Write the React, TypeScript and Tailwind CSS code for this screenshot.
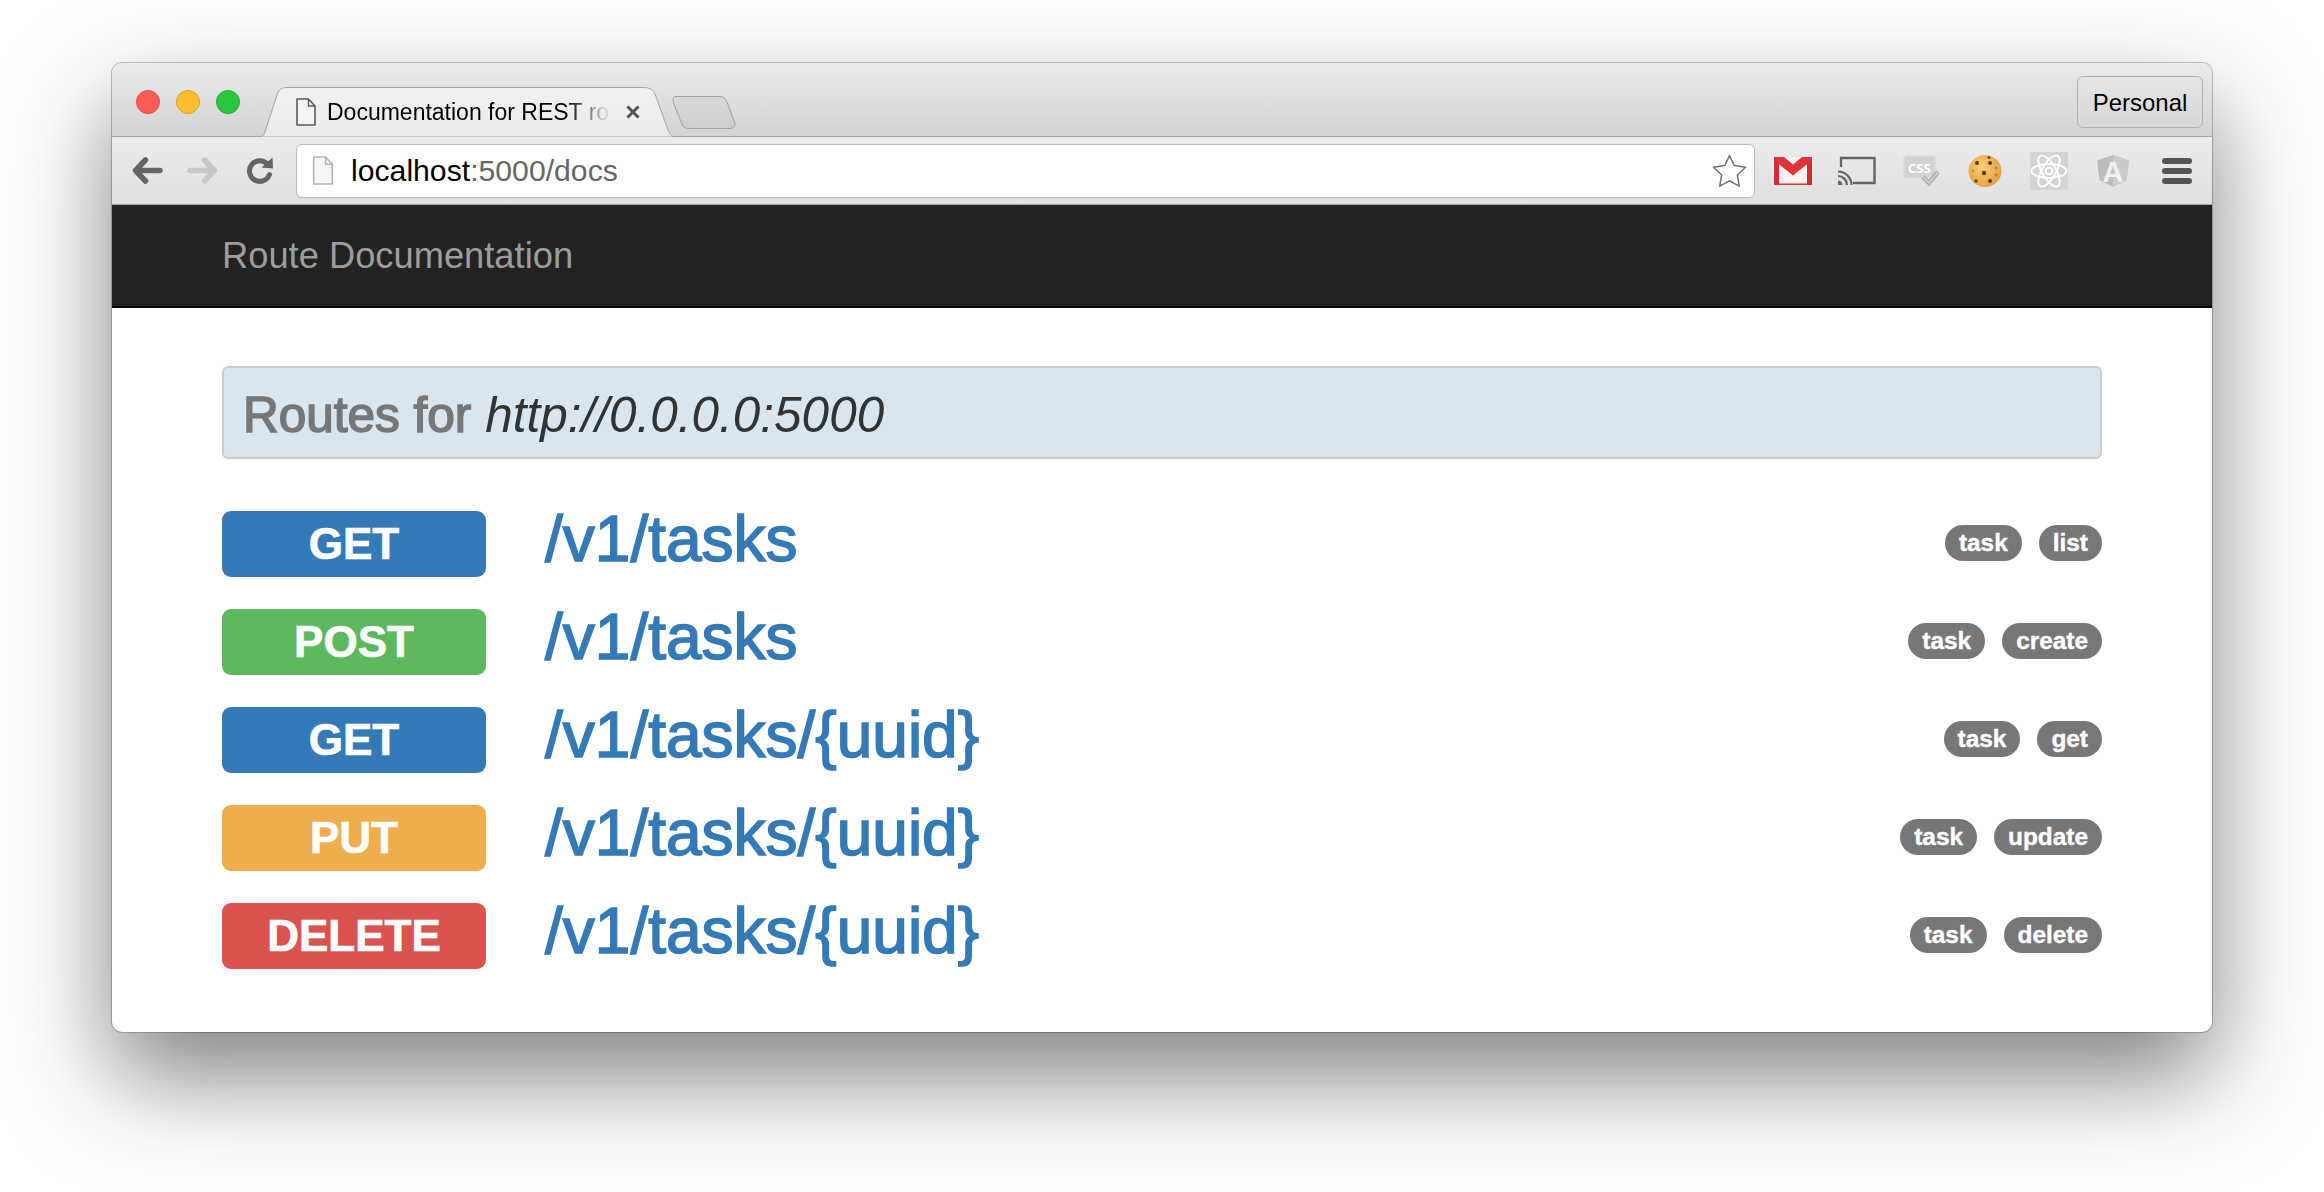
const routes = [
  { method: 'GET', color: 'bg-[#337ab7]', path: '/v1/tasks', tags: ['task', 'list'] },
  { method: 'POST', color: 'bg-[#5cb85c]', path: '/v1/tasks', tags: ['task', 'create'] },
  { method: 'GET', color: 'bg-[#337ab7]', path: '/v1/tasks/{uuid}', tags: ['task', 'get'] },
  { method: 'PUT', color: 'bg-[#f0ad4e]', path: '/v1/tasks/{uuid}', tags: ['task', 'update'] },
  { method: 'DELETE', color: 'bg-[#d9534f]', path: '/v1/tasks/{uuid}', tags: ['task', 'delete'] },
];

const TabShape = () => (
  <svg className="absolute inset-0" width="414" height="50" viewBox="0 0 414 50">
    <defs>
      <linearGradient id="tabFill" x1="0" y1="0" x2="0" y2="1">
        <stop offset="0" stopColor="#f1f1f1" />
        <stop offset="1" stopColor="#ebebeb" />
      </linearGradient>
    </defs>
    <path
      d="M0 49.5C3 49.5 4 48 5 45L17 8C19 2 22 .5 27 .5L383 .5C389 .5 393 2 395 7L408 43C410 47 411 49.5 414 49.5"
      fill="url(#tabFill)"
      stroke="#a6a6a6"
      strokeWidth="1"
    />
  </svg>
);

const PageIcon = ({ className, stroke, fill, w, h }: { className?: string; stroke: string; fill: string; w: number; h: number }) => (
  <svg className={className} width={w} height={h} viewBox="0 0 20 28">
    <path d="M1 1H12.5L19 8V27H1Z" fill={fill} stroke={stroke} strokeWidth="1.6" strokeLinejoin="round" />
    <path d="M12.5 1V8H19" fill="none" stroke={stroke} strokeWidth="1.4" />
  </svg>
);

const Arrow = ({ color, flip, className }: { color: string; flip?: boolean; className?: string }) => (
  <svg className={className} width="31" height="27" viewBox="0 0 31 27">
    <g transform={flip ? 'translate(31 0) scale(-1 1)' : undefined}>
      <path d="M13.5 3L3.5 13.5L13.5 24" fill="none" stroke={color} strokeWidth="5.5" strokeLinecap="round" strokeLinejoin="round" />
      <path d="M5 13.5H28" fill="none" stroke={color} strokeWidth="5.5" strokeLinecap="round" />
    </g>
  </svg>
);

const Reload = ({ className }: { className?: string }) => (
  <svg className={className} width="28" height="27" viewBox="0 0 28 27">
    <path d="M21.5 7.2A10.3 10.3 0 1 0 23.5 17.5" fill="none" stroke="#646464" strokeWidth="5" strokeLinecap="round" />
    <path d="M15.5 10.5L27 11.5L26.5 .5Z" fill="#646464" />
  </svg>
);

const Star = ({ className }: { className?: string }) => (
  <svg className={className} width="35" height="34" viewBox="0 0 35 34">
    <path
      d="M17.5 1.500L22.300 11.600L33.500 13.200L25.300 21L27.300 32.200L17.500 26.800L7.700 32.200L9.700 21L1.500 13.200L12.700 11.600Z"
      fill="#fff"
      stroke="#707070"
      strokeWidth="1.500"
      strokeLinejoin="round"
    />
  </svg>
);

const Gmail = ({ className }: { className?: string }) => (
  <svg className={className} width="38" height="28" viewBox="0 0 38 28">
    <g className="blur-[0.4px]">
      <rect width="38" height="28" fill="#d92a2e" />
      <rect x="5" y="0" width="28" height="26.500" fill="#fbf3f2" />
      <path d="M1 0H10L19 7.500L28 0H37V4L19 18.500L1 4Z" fill="#e2333a" />
    </g>
  </svg>
);

const Cast = ({ className }: { className?: string }) => (
  <svg className={className} width="38" height="29" viewBox="0 0 38 29">
    <path d="M3 11V2H36.500V27H15" fill="none" stroke="#646464" strokeWidth="2.400" />
    <path d="M0 15.500A13.500 13.500 0 0 1 13.500 29" fill="none" stroke="#646464" strokeWidth="2.200" />
    <path d="M0 20A9 9 0 0 1 9 29" fill="none" stroke="#646464" strokeWidth="2.200" />
    <path d="M0 24.500A4.500 4.500 0 0 1 4.500 29H0Z" fill="#646464" />
  </svg>
);

const CssCheck = ({ className }: { className?: string }) => (
  <svg className={className} width="36" height="32" viewBox="0 0 36 32">
    <path d="M1 3Q1 1 3 1H30Q32 1 32 3V21Q32 23 30 23H3Q1 23 1 21Z" fill="#d2d2d2" stroke="#dcdcdc" strokeWidth="1.500" />
    <text x="5" y="17.500" fontFamily="'Open Sans', sans-serif" fontWeight="700" fontSize="13" fill="#fff">CSS</text>
    <path d="M20 22L26 28L35 17" fill="none" stroke="#a9a9a9" strokeWidth="4.500" />
    <path d="M20 22L26 28L35 17" fill="none" stroke="#d4d4d4" strokeWidth="1.600" />
  </svg>
);

const cookieChips = [
  { x: 9, y: 8, r: 2, c: '#5d3a17' },
  { x: 22, y: 8, r: 2, c: '#5d3a17' },
  { x: 21, y: 2.500, r: 1.500, c: '#6e4a22' },
  { x: 16, y: 18, r: 2.200, c: '#5d3a17' },
  { x: 8, y: 26, r: 1.800, c: '#6e4a22' },
  { x: 22, y: 26, r: 2, c: '#5d3a17' },
  { x: 28, y: 13, r: 1.600, c: '#b98336' },
  { x: 28, y: 20, r: 1.600, c: '#b98336' },
  { x: 5, y: 16, r: 1.400, c: '#c9963f' },
];

const Cookie = ({ className }: { className?: string }) => (
  <svg className={className} width="34" height="32" viewBox="0 0 34 32">
    <defs>
      <radialGradient id="cookieFill" cx=".42" cy=".38" r=".7">
        <stop offset="0" stopColor="#f8cd7c" />
        <stop offset="1" stopColor="#e49a34" />
      </radialGradient>
    </defs>
    <g className="blur-[0.4px]">
      <ellipse cx="17" cy="16" rx="16.500" ry="16" fill="url(#cookieFill)" />
      {cookieChips.map((chip) => (
        <circle key={`${chip.x}-${chip.y}`} cx={chip.x} cy={chip.y} r={chip.r} fill={chip.c} />
      ))}
    </g>
  </svg>
);

const Atom = ({ className }: { className?: string }) => (
  <svg className={className} width="38" height="38" viewBox="0 0 38 38">
    <rect width="38" height="38" fill="#d4d4d4" />
    <g fill="none" stroke="#fff" strokeWidth="1.900">
      <ellipse cx="19" cy="19" rx="17.500" ry="7" />
      <ellipse cx="19" cy="19" rx="17.500" ry="7" transform="rotate(60 19 19)" />
      <ellipse cx="19" cy="19" rx="17.500" ry="7" transform="rotate(120 19 19)" />
      <circle cx="19" cy="19" r="3.400" strokeWidth="2.400" />
    </g>
  </svg>
);

const Angular = ({ className }: { className?: string }) => (
  <svg className={className} width="32" height="32" viewBox="0 0 32 32">
    <path d="M16 0L32 5.500L29.500 25L16 32L2.500 25L0 5.500Z" fill="#bcbcbc" />
    <path d="M16 0L32 5.500L29.500 25L16 32Z" fill="#cbcbcb" />
    <text x="16" y="26.500" textAnchor="middle" fontFamily="'Liberation Sans', sans-serif" fontWeight="700" fontSize="29" fill="#f1f1f1">A</text>
  </svg>
);

const Menu = ({ className }: { className?: string }) => (
  <div className={`flex w-[30px] flex-col gap-[4px] ${className ?? ''}`}>
    <div className="h-[6px] rounded-full bg-[#555]" />
    <div className="h-[6px] rounded-full bg-[#555]" />
    <div className="h-[6px] rounded-full bg-[#555]" />
  </div>
);

const App = () => {
  return (
    <div className="h-[1192px] w-[2324px] overflow-hidden bg-white pl-[112px] pt-[63px] font-['Liberation_Sans',Arial,sans-serif]">
      <div className="h-[969px] w-[2100px] rounded-[10px] bg-white shadow-[0_0_0_1px_rgba(0,0,0,0.22),0_44px_100px_rgba(0,0,0,0.5)]">
        {/* Tab strip */}
        <div className="flex h-[74px] items-end rounded-t-[10px] border-b border-[#a3a3a3] bg-gradient-to-b from-[#ebebeb] to-[#d3d3d3]">
          <div className="ml-[24px] flex gap-[16px] self-start pt-[27px]">
            <div className="h-[24px] w-[24px] rounded-full border border-[#e2463f] bg-[#fc5b57]" />
            <div className="h-[24px] w-[24px] rounded-full border border-[#e1a116] bg-[#febc2e]" />
            <div className="h-[24px] w-[24px] rounded-full border border-[#14ae2c] bg-[#28c940]" />
          </div>
          <div className="relative z-10 ml-[20px] -mb-px h-[50px] w-[414px]">
            <TabShape />
            <div className="relative flex h-full items-center pl-[36px]">
              <PageIcon stroke="#5a5a5a" fill="#f3f3f3" w={20} h={28} />
              <div className="ml-[11px] w-[284px] whitespace-nowrap text-[23px] text-black [mask-image:linear-gradient(to_right,black_84%,transparent_100%)]">
                Documentation for REST ro
              </div>
              <svg className="ml-[14px]" width="16" height="16" viewBox="0 0 16 16">
                <path d="M2.500 2.500L13.500 13.500M13.500 2.500L2.500 13.500" stroke="#555" strokeWidth="3" />
              </svg>
            </div>
          </div>
          <svg className="-ml-[2px] mb-[7px]" width="64" height="33" viewBox="0 0 64 33">
            <defs>
              <linearGradient id="newTabFill" x1="0" y1="0" x2="0" y2="1">
                <stop offset="0" stopColor="#d8d8d8" />
                <stop offset="1" stopColor="#cecece" />
              </linearGradient>
            </defs>
            <path
              d="M4 .5H48C52 .5 53 3 55 6L62.500 26C64 30 61 32.500 58 32.500H17C13 32.500 11 31 10 28L1.500 7C.5 3 1 .5 4 .5Z"
              fill="url(#newTabFill)"
              stroke="#a0a0a0"
            />
          </svg>
          <button className="ml-auto mr-[9px] mt-[13px] h-[52px] w-[126px] self-start rounded-[6px] border border-[#ababab] pt-[2px] text-center text-[24px] text-black">
            Personal
          </button>
        </div>

        {/* Toolbar */}
        <div className="flex h-[68px] items-center border-b border-[#a3a3a3] bg-gradient-to-b from-[#ececec] to-[#e0e0e0]">
          <Arrow color="#646464" className="ml-[20px]" />
          <Arrow color="#c8c8c8" flip className="ml-[24px]" />
          <Reload className="ml-[28px]" />
          <div className="ml-[22px] flex h-[54px] w-[1459px] items-center rounded-[6px] border border-[#b9b9b9] bg-white pl-[15px] pr-[7px]">
            <PageIcon stroke="#b5b5b5" fill="#f7f7f7" w={22} h={29} />
            <div className="ml-[17px] pt-[1px] text-[30.2px] text-[#666]">
              <span className="text-black">localhost</span>:5000/docs
            </div>
            <Star className="ml-auto" />
          </div>
          <Gmail className="ml-[19px]" />
          <Cast className="ml-[26px]" />
          <CssCheck className="ml-[27px]" />
          <Cookie className="ml-[29px]" />
          <Atom className="ml-[28px]" />
          <Angular className="ml-[29px]" />
          <Menu className="ml-[33px]" />
        </div>

        {/* Navbar */}
        <div className="flex h-[103px] items-center border-b-2 border-black bg-[#222] pl-[110px] pt-[2px] text-[36.3px] text-[#9d9d9d]">
          Route Documentation
        </div>

        {/* Page body */}
        <div className="px-[110px] pt-[58px]">
          <div className="flex h-[93px] items-center rounded-[6px] border-2 border-[#ccc] bg-[#d9e6f0] pl-[19px] pt-[6px] text-[49.5px]">
            <span className="whitespace-pre text-[#777] [-webkit-text-stroke:1.6px_#777]">Routes for </span>
            <em className="text-[#333]">http://0.0.0.0:5000</em>
          </div>

          <div className="mt-[52px] flex flex-col gap-[32px]">
            {routes.map((route, i) => (
              <div key={i} className="flex h-[66px] items-center">
                <div className={`flex h-[66px] w-[264px] items-center justify-center rounded-[9px] text-[44px] font-bold text-white [-webkit-text-stroke:0.7px_#fff] ${route.color}`}>
                  {route.method}
                </div>
                <a className="ml-[59px] pb-[11px] text-[64px] text-[#337ab7] [-webkit-text-stroke:1.6px_#337ab7]">{route.path}</a>
                <div className="ml-auto flex gap-[17px] pb-[2px]">
                  {route.tags.map((tag) => (
                    <span key={tag} className="flex h-[36px] items-center rounded-full bg-[#777] px-[14px] text-[24.4px] font-bold text-white [-webkit-text-stroke:0.4px_#fff]">
                      {tag}
                    </span>
                  ))}
                </div>
              </div>
            ))}
          </div>
        </div>
      </div>
    </div>
  );
};

export default App;
